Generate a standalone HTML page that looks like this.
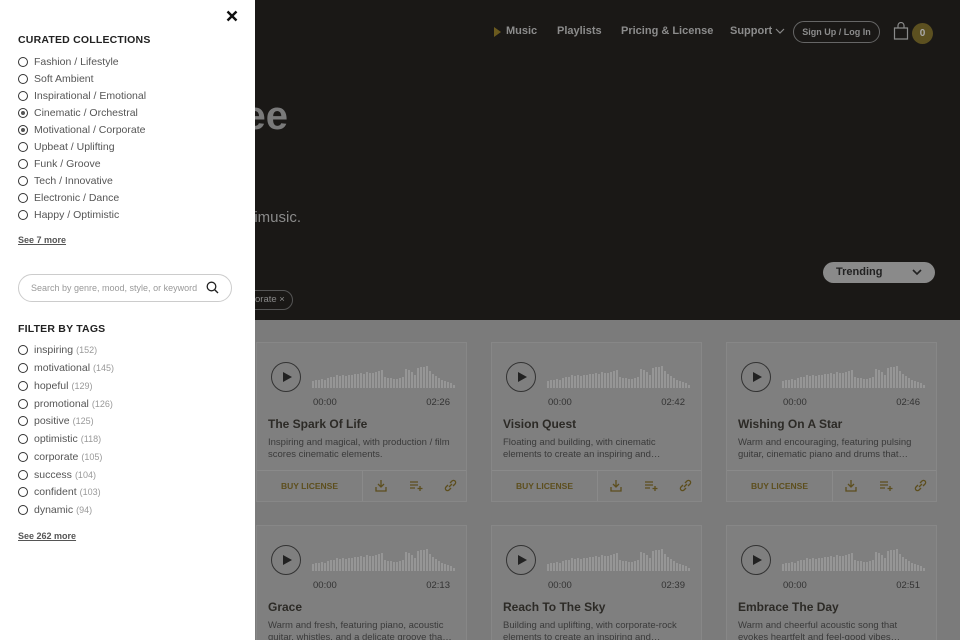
<!DOCTYPE html>
<html><head><meta charset="utf-8"><style>
*{margin:0;padding:0;box-sizing:border-box}
html,body{width:960px;height:640px;overflow:hidden}
body{position:relative;font-family:"Liberation Sans",sans-serif;background:#7b7b7b}
.wrap{position:absolute;left:0;top:0;width:960px;height:640px;overflow:hidden}
.hero{position:absolute;left:0;top:0;width:960px;height:320px;background:#1a1816}
.nav{position:absolute;top:25px;font-size:11px;font-weight:bold;color:#8c8c8c}
.panel{position:absolute;left:0;top:0;width:255px;height:640px;background:#fff;color:#444}
.h{position:absolute;left:18px;font-size:10.5px;font-weight:bold;color:#222;letter-spacing:.2px}
.it{position:absolute;left:18px;font-size:10.5px;color:#555;height:14px;line-height:14px}
.it i{position:absolute;left:0;top:2px;width:10px;height:10px;border:1.3px solid #333;border-radius:50%}
.it i.on::after{content:"";position:absolute;left:1.5px;top:1.5px;width:4.4px;height:4.4px;border-radius:50%;background:#555}
.it span{margin-left:16px}
.it em{font-style:normal;font-size:9px;color:#999;margin-left:3px}
.more{position:absolute;left:18px;font-size:9px;font-weight:bold;color:#555;text-decoration:underline}
.card{position:absolute;width:211px;background:#7f7f7f;border:1px solid #878787;height:160px;overflow:hidden}
.card.s{height:115px;border-bottom:none}
.card .play{position:absolute;left:14px;top:19px;width:30px;height:30px;border:1.2px solid #333;border-radius:50%}
.card .play::after{content:"";position:absolute;left:11px;top:9px;border-left:9px solid #222;border-top:5.5px solid transparent;border-bottom:5.5px solid transparent}
.card svg.w{position:absolute;left:55px;top:19px}
.t0{position:absolute;left:56px;top:54px;font-size:9.5px;color:#333}
.t1{position:absolute;right:16px;top:54px;font-size:9.5px;color:#333}
.ti{position:absolute;left:11px;top:74px;font-size:12px;font-weight:bold;color:#2c2a26}
.de{position:absolute;left:11px;top:94px;width:190px;font-size:9.5px;line-height:12px;color:#3a3a3a;height:24px;overflow:hidden}
.ft{position:absolute;left:0;top:127px;width:209px;height:32px;border-top:1px solid #8a8a8a}
.ft b{position:absolute;left:24px;top:10px;font-size:8.5px;color:#5d4e1d}
.ft .dv{position:absolute;left:105px;top:0;width:1px;height:31px;background:#8a8a8a}
.ft svg{position:absolute;top:8px}
</style></head><body><div class="wrap">
<div class="hero">
 <div style="position:absolute;left:494px;top:27px;border-left:7px solid #6b5a1e;border-top:5px solid transparent;border-bottom:5px solid transparent"></div>
 <div class="nav" style="left:506px">Music</div>
 <div class="nav" style="left:557px">Playlists</div>
 <div class="nav" style="left:621px">Pricing &amp; License</div>
 <div class="nav" style="left:730px">Support</div>
 <svg style="position:absolute;left:775px;top:28px" width="10" height="7"><path d="M1 1l4 4 4-4" fill="none" stroke="#888" stroke-width="1.2"/></svg>
 <div style="position:absolute;left:793px;top:21px;width:87px;height:22px;border:1.2px solid #666;border-radius:11px;color:#8c8c8c;font-size:9px;font-weight:bold;text-align:center;line-height:20px">Sign Up / Log In</div>
 <svg style="position:absolute;left:893px;top:22px" width="16" height="18"><path d="M1.5 6h13v11h-13z M5 6V3.5a3 3 0 0 1 6 0V6" fill="none" stroke="#8a8a8a" stroke-width="1.2"/></svg>
 <div style="position:absolute;left:912px;top:23px;width:21px;height:21px;border-radius:50%;background:#5c5020;color:#aaa;font-size:10px;font-weight:bold;text-align:center;line-height:21px">0</div>
 <div style="position:absolute;left:0;width:288px;text-align:right;top:94px;font-size:40px;font-weight:bold;color:#7a7a7a;white-space:nowrap">Free</div>
 <div style="position:absolute;left:0;width:301px;text-align:right;top:209px;font-size:15px;color:#8a8a8a;white-space:nowrap">by maximusic.</div>
 <div style="position:absolute;left:823px;top:262px;width:112px;height:21px;border-radius:11px;background:#8a8a8a;color:#222;font-size:11px;font-weight:bold;line-height:20px;padding-left:13px">Trending</div>
 <svg style="position:absolute;left:912px;top:269px" width="10" height="7"><path d="M1 1l4 4 4-4" fill="none" stroke="#222" stroke-width="1.6"/></svg>
 <div style="position:absolute;left:200px;top:290px;width:93px;height:20px;border:1.2px solid #555;border-radius:10px;color:#888;font-size:9.5px;line-height:18px;padding-left:54px">orate ×</div>
</div>

<svg width="0" height="0" style="position:absolute"><defs>
<path id="wv" d="M1 26v-7M4 26v-8M7 26v-8M10 26v-9M13 26v-8M16 26v-10M19 26v-11M22 26v-11M25 26v-13M28 26v-12M31 26v-13M34 26v-12M37 26v-13M40 26v-13M43 26v-14M46 26v-14M49 26v-15M52 26v-14M55 26v-16M58 26v-15M61 26v-15M64 26v-16M67 26v-17M70 26v-18M73 26v-11M76 26v-10M79 26v-10M82 26v-9M85 26v-9M88 26v-10M91 26v-11M94 26v-19M97 26v-18M100 26v-16M103 26v-13M106 26v-20M109 26v-21M112 26v-21M115 26v-22M118 26v-17M121 26v-14M124 26v-12M127 26v-10M130 26v-8M133 26v-7M136 26v-6M139 26v-5M142 26v-3" stroke="#9a9a9a" stroke-width="1.7"/>
</defs></svg>

<div class="card" style="left:256px;top:342px"><div class="play"></div><svg class="w" width="146" height="34"><use href="#wv"/></svg><div class="t0">00:00</div><div class="t1">02:26</div><div class="ti">The Spark Of Life</div><div class="de">Inspiring and magical, with production / film scores cinematic elements.</div><div class="ft"><b>BUY LICENSE</b><div class="dv"></div>
<svg style="left:118px" width="12" height="13"><path d="M6 1v7M3 5l3 3 3-3M1 8v4h10V8" fill="none" stroke="#5d4e1d" stroke-width="1.3"/></svg>
<svg style="left:152px" width="14" height="13"><path d="M1 3h8M1 6h8M1 9h5M11 7v5M8.5 9.5h5" fill="none" stroke="#5d4e1d" stroke-width="1.3"/></svg>
<svg style="left:187px" width="13" height="13"><path d="M5 8l3-3M4 6l-2 2a2 2 0 0 0 3 3l2-2M9 7l2-2a2 2 0 0 0-3-3L6 4" fill="none" stroke="#5d4e1d" stroke-width="1.3"/></svg></div></div>

<div class="card" style="left:491px;top:342px"><div class="play"></div><svg class="w" width="146" height="34"><use href="#wv"/></svg><div class="t0">00:00</div><div class="t1">02:42</div><div class="ti">Vision Quest</div><div class="de">Floating and building, with cinematic elements to create an inspiring and…</div><div class="ft"><b>BUY LICENSE</b><div class="dv"></div>
<svg style="left:118px" width="12" height="13"><path d="M6 1v7M3 5l3 3 3-3M1 8v4h10V8" fill="none" stroke="#5d4e1d" stroke-width="1.3"/></svg>
<svg style="left:152px" width="14" height="13"><path d="M1 3h8M1 6h8M1 9h5M11 7v5M8.5 9.5h5" fill="none" stroke="#5d4e1d" stroke-width="1.3"/></svg>
<svg style="left:187px" width="13" height="13"><path d="M5 8l3-3M4 6l-2 2a2 2 0 0 0 3 3l2-2M9 7l2-2a2 2 0 0 0-3-3L6 4" fill="none" stroke="#5d4e1d" stroke-width="1.3"/></svg></div></div>

<div class="card" style="left:726px;top:342px"><div class="play"></div><svg class="w" width="146" height="34"><use href="#wv"/></svg><div class="t0">00:00</div><div class="t1">02:46</div><div class="ti">Wishing On A Star</div><div class="de">Warm and encouraging, featuring pulsing guitar, cinematic piano and drums that…</div><div class="ft"><b>BUY LICENSE</b><div class="dv"></div>
<svg style="left:118px" width="12" height="13"><path d="M6 1v7M3 5l3 3 3-3M1 8v4h10V8" fill="none" stroke="#5d4e1d" stroke-width="1.3"/></svg>
<svg style="left:152px" width="14" height="13"><path d="M1 3h8M1 6h8M1 9h5M11 7v5M8.5 9.5h5" fill="none" stroke="#5d4e1d" stroke-width="1.3"/></svg>
<svg style="left:187px" width="13" height="13"><path d="M5 8l3-3M4 6l-2 2a2 2 0 0 0 3 3l2-2M9 7l2-2a2 2 0 0 0-3-3L6 4" fill="none" stroke="#5d4e1d" stroke-width="1.3"/></svg></div></div>

<div class="card s" style="left:256px;top:525px"><div class="play"></div><svg class="w" width="146" height="34"><use href="#wv"/></svg><div class="t0">00:00</div><div class="t1">02:13</div><div class="ti">Grace</div><div class="de">Warm and fresh, featuring piano, acoustic guitar, whistles, and a delicate groove tha…</div></div>
<div class="card s" style="left:491px;top:525px"><div class="play"></div><svg class="w" width="146" height="34"><use href="#wv"/></svg><div class="t0">00:00</div><div class="t1">02:39</div><div class="ti">Reach To The Sky</div><div class="de">Building and uplifting, with corporate-rock elements to create an inspiring and…</div></div>
<div class="card s" style="left:726px;top:525px"><div class="play"></div><svg class="w" width="146" height="34"><use href="#wv"/></svg><div class="t0">00:00</div><div class="t1">02:51</div><div class="ti">Embrace The Day</div><div class="de">Warm and cheerful acoustic song that evokes heartfelt and feel-good vibes…</div></div>

<div class="panel">
 <svg style="position:absolute;left:226px;top:10px" width="12" height="12"><path d="M1.5 1.5l9 9M10.5 1.5l-9 9" stroke="#111" stroke-width="2.4"/></svg>
 <div class="h" style="top:34px">CURATED COLLECTIONS</div>
 <div class="it" style="top:55px"><i></i><span>Fashion / Lifestyle</span></div>
 <div class="it" style="top:72px"><i></i><span>Soft Ambient</span></div>
 <div class="it" style="top:89px"><i></i><span>Inspirational / Emotional</span></div>
 <div class="it" style="top:106px"><i class="on"></i><span>Cinematic / Orchestral</span></div>
 <div class="it" style="top:123px"><i class="on"></i><span>Motivational / Corporate</span></div>
 <div class="it" style="top:140px"><i></i><span>Upbeat / Uplifting</span></div>
 <div class="it" style="top:157px"><i></i><span>Funk / Groove</span></div>
 <div class="it" style="top:174px"><i></i><span>Tech / Innovative</span></div>
 <div class="it" style="top:191px"><i></i><span>Electronic / Dance</span></div>
 <div class="it" style="top:208px"><i></i><span>Happy / Optimistic</span></div>
 <div class="more" style="top:235px">See 7 more</div>
 <div style="position:absolute;left:18px;top:274px;width:214px;height:28px;border:1px solid #ccc;border-radius:14px;font-size:9px;color:#999;line-height:26px;padding-left:12px">Search by genre, mood, style, or keyword</div>
 <svg style="position:absolute;left:206px;top:281px" width="13" height="13"><circle cx="5.5" cy="5.5" r="4.3" fill="none" stroke="#222" stroke-width="1.3"/><path d="M8.7 8.7l3.3 3.3" stroke="#222" stroke-width="1.4"/></svg>
 <div class="h" style="top:323px">FILTER BY TAGS</div>
 <div class="it" style="top:343px"><i></i><span>inspiring</span><em>(152)</em></div>
 <div class="it" style="top:361px"><i></i><span>motivational</span><em>(145)</em></div>
 <div class="it" style="top:379px"><i></i><span>hopeful</span><em>(129)</em></div>
 <div class="it" style="top:397px"><i></i><span>promotional</span><em>(126)</em></div>
 <div class="it" style="top:414px"><i></i><span>positive</span><em>(125)</em></div>
 <div class="it" style="top:432px"><i></i><span>optimistic</span><em>(118)</em></div>
 <div class="it" style="top:450px"><i></i><span>corporate</span><em>(105)</em></div>
 <div class="it" style="top:468px"><i></i><span>success</span><em>(104)</em></div>
 <div class="it" style="top:485px"><i></i><span>confident</span><em>(103)</em></div>
 <div class="it" style="top:503px"><i></i><span>dynamic</span><em>(94)</em></div>
 <div class="more" style="top:531px">See 262 more</div>
</div>
</div></body></html>
